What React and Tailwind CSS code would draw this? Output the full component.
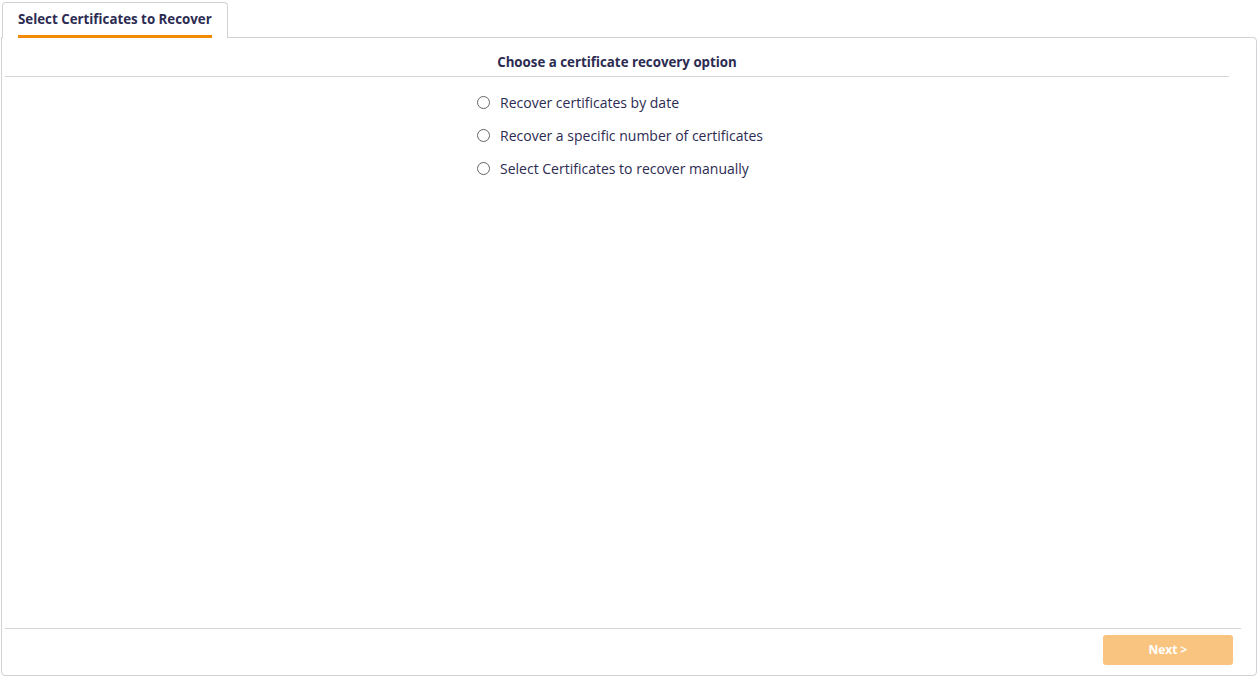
import { useState } from 'react';

const OPTIONS = [
  { id: 'date', label: 'Recover certificates by date' },
  { id: 'number', label: 'Recover a specific number of certificates' },
  { id: 'manual', label: 'Select Certificates to recover manually' },
];

export default function App() {
  const [choice, setChoice] = useState(null);

  return (
    <div className="h-[677px] bg-white px-[1px] pt-[2px] pb-[1px] flex flex-col font-['Open_Sans',sans-serif] text-[#2c2b52]">
      {/* Tab strip */}
      <div className="flex">
        <div className="relative z-10 -mb-px ml-[1px] h-[36px] bg-white border border-b-0 border-[#cfd2d6] rounded-t-[4px] px-[15px] pt-[8px]">
          <p className="text-[13.3px] font-bold leading-[17px] whitespace-nowrap">Select Certificates to Recover</p>
          <div className="mt-[7px] h-[3px] bg-[#f28b00]" />
        </div>
      </div>

      {/* Panel */}
      <div className="flex-1 flex flex-col border border-[#cfd2d6] rounded-[4px] rounded-tl-none">
        <div className="ml-[3px] mr-[27px] h-[39px] pt-[15px] border-b border-[#d3d5d8] text-center">
          <h2 className="text-[13.3px] font-bold leading-[18px]">Choose a certificate recovery option</h2>
        </div>

        <div className="ml-[3px] mr-[27px] mt-[9px] flex justify-center">
          <div className="flex flex-col pl-[6px]">
            {OPTIONS.map(o => (
              <label key={o.id} className="h-[33px] flex items-center gap-[10px] cursor-pointer">
                <span className="w-[13px] h-[13px] rounded-full border border-[#666666] bg-white flex items-center justify-center">
                  {choice === o.id && <span className="w-[7px] h-[7px] rounded-full bg-[#2c2b52]" />}
                </span>
                <input type="radio" name="recovery" className="hidden" onChange={() => setChoice(o.id)} />
                <span className="text-[14px] leading-[18px]">{o.label}</span>
              </label>
            ))}
          </div>
        </div>

        <div className="flex-1" />

        <div className="ml-[3px] mr-[15px] border-t border-[#d3d5d8] pt-[6px] pb-[10px] pr-[8px] flex justify-end">
          <button
            disabled={!choice}
            className="w-[130px] h-[30px] rounded-[3px] bg-[#f9c47f] text-white text-[12px] font-bold"
          >
            Next &gt;
          </button>
        </div>
      </div>
    </div>
  );
}
